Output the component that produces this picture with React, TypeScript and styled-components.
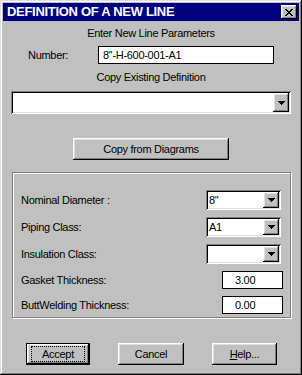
import React from "react";
import styled, { createGlobalStyle } from "styled-components";

const Global = createGlobalStyle`
  html, body { margin: 0; padding: 0; background: #c0c0c0; }
  body { font-family: "Liberation Sans", Arial, sans-serif; font-size: 11px; letter-spacing: -0.3px; color: #000; }
`;

const raised = `box-shadow: inset -1px -1px #000, inset 1px 1px #fff, inset -2px -2px #808080, inset 2px 2px #dfdfdf;`;
const sunken = `box-shadow: inset 1px 1px #808080, inset -1px -1px #fff, inset 2px 2px #000, inset -2px -2px #dfdfdf;`;

const Window = styled.div`
  width: 302px;
  height: 375px;
  box-sizing: border-box;
  background: #c0c0c0;
  padding: 3px;
  box-shadow: inset -1px -1px #000, inset 1px 1px #dfdfdf, inset -2px -2px #808080, inset 2px 2px #fff;
  display: flex;
  flex-direction: column;
`;

const TitleBar = styled.div`
  height: 18px;
  background: #000080;
  display: flex;
  align-items: center;
  justify-content: space-between;
  padding: 0 2px 0 4px;
`;

const TitleText = styled.div`
  color: #fff;
  font-weight: bold;
  font-size: 13px;
  letter-spacing: -0.3px;
  line-height: 18px;
`;

const CloseButton = styled.div`
  width: 16px;
  height: 14px;
  background: #c0c0c0;
  ${raised}
  display: flex;
  align-items: center;
  justify-content: center;
`;

const Body = styled.div`
  display: flex;
  flex-direction: column;
`;

const Caption = styled.div<{ $mt: number }>`
  margin-top: ${(p) => p.$mt}px;
  height: 14px;
  line-height: 14px;
  text-align: center;
`;

const NumberRow = styled.div`
  margin-top: 6px;
  display: flex;
  align-items: center;
  padding-left: 25px;
`;

const Label = styled.div<{ $w?: number }>`
  ${(p) => (p.$w ? `width: ${p.$w}px;` : "flex: 1;")}
  line-height: 14px;
`;

const TextBox = styled.div<{ $w: number; $pl: number }>`
  width: ${(p) => p.$w}px;
  height: 18px;
  box-sizing: border-box;
  border: 1px solid #000;
  background: #fff;
  padding-left: ${(p) => p.$pl}px;
  line-height: 16px;
`;

const ComboFrame = styled.div<{ $w: number; $h: number; $ml: number; $mr: number; $mt: number }>`
  width: ${(p) => p.$w}px;
  height: ${(p) => p.$h}px;
  margin: ${(p) => p.$mt}px ${(p) => p.$mr}px 0 ${(p) => p.$ml}px;
  box-sizing: border-box;
  padding: 2px;
  background: #fff;
  ${sunken}
  display: flex;
`;

const ComboValue = styled.div`
  flex: 1;
  padding-left: 1px;
  display: flex;
  align-items: center;
`;

const DropButton = styled.div`
  width: 16px;
  background: #c0c0c0;
  ${raised}
  display: flex;
  align-items: center;
  justify-content: center;
`;

const PushButton = styled.div<{ $w: number; $default?: boolean }>`
  width: ${(p) => p.$w}px;
  height: 22px;
  box-sizing: border-box;
  background: #c0c0c0;
  display: flex;
  align-items: center;
  justify-content: center;
  ${(p) =>
    p.$default
      ? `border: 1px solid #000; box-shadow: inset -1px -1px #000, inset 1px 1px #fff, inset -2px -2px #808080, inset 2px 2px #dfdfdf;`
      : raised}
`;

const CenterButton = styled(PushButton)`
  margin-top: 24px;
  align-self: center;
  height: 22px;
`;

const FocusRing = styled.div`
  border: 1px dotted #000;
  padding: 1px 3px;
  line-height: 12px;
  width: 46px;
  text-align: center;
`;

const Group = styled.div`
  margin: 12px 0 0 9px;
  width: 279px;
  height: 146px;
  box-sizing: border-box;
  border: 1px solid #808080;
  box-shadow: inset 1px 1px #fff, 1px 1px #fff;
  padding: 17px 7px 3px 8px;
  display: flex;
  flex-direction: column;
  gap: 7px;
`;

const GroupRow = styled.div<{ $h: number }>`
  height: ${(p) => p.$h}px;
  display: flex;
  align-items: center;
`;

const ButtonBar = styled.div`
  margin-top: 25px;
  padding-left: 23px;
  display: flex;
  gap: 28px;
`;

const Arrow = () => (
  <svg width="7" height="4" viewBox="0 0 7 4" shapeRendering="crispEdges">
    <rect x="0" y="0" width="7" height="1" fill="#000" />
    <rect x="1" y="1" width="5" height="1" fill="#000" />
    <rect x="2" y="2" width="3" height="1" fill="#000" />
    <rect x="3" y="3" width="1" height="1" fill="#000" />
  </svg>
);

const CloseX = () => (
  <svg width="8" height="7" viewBox="0 0 8 7" shapeRendering="crispEdges">
    <path d="M0 0h2v1h-2zM6 0h2v1h-2zM1 1h2v1h-2zM5 1h2v1h-2zM2 2h4v1h-4zM3 3h2v1h-2zM2 4h4v1h-4zM1 5h2v1h-2zM5 5h2v1h-2zM0 6h2v1h-2zM6 6h2v1h-2z" fill="#000" />
  </svg>
);

type ComboProps = { w: number; h: number; ml?: number; mr?: number; mt?: number; value?: string };
const Combo = ({ w, h, ml = 0, mr = 0, mt = 0, value = "" }: ComboProps) => (
  <ComboFrame $w={w} $h={h} $ml={ml} $mr={mr} $mt={mt}>
    <ComboValue>{value}</ComboValue>
    <DropButton>
      <Arrow />
    </DropButton>
  </ComboFrame>
);

export default function App() {
  return (
    <>
      <Global />
      <Window>
        <TitleBar>
          <TitleText>DEFINITION OF A NEW LINE</TitleText>
          <CloseButton>
            <CloseX />
          </CloseButton>
        </TitleBar>
        <Body>
          <Caption $mt={5}>Enter New Line Parameters</Caption>
          <NumberRow>
            <Label $w={70}>Number:</Label>
            <TextBox $w={176} $pl={4}>8''-H-600-001-A1</TextBox>
          </NumberRow>
          <Caption $mt={6}>Copy Existing Definition</Caption>
          <Combo w={280} h={23} ml={8} mt={7} />
          <CenterButton $w={156}>Copy from Diagrams</CenterButton>
          <Group>
            <GroupRow $h={20}>
              <Label>Nominal Diameter :</Label>
              <Combo w={75} h={20} mr={2} value="8''" />
            </GroupRow>
            <GroupRow $h={20}>
              <Label>Piping Class:</Label>
              <Combo w={75} h={20} mr={2} value="A1" />
            </GroupRow>
            <GroupRow $h={20}>
              <Label>Insulation Class:</Label>
              <Combo w={75} h={20} mr={2} />
            </GroupRow>
            <GroupRow $h={18}>
              <Label>Gasket Thickness:</Label>
              <TextBox $w={61} $pl={12}>3.00</TextBox>
            </GroupRow>
            <GroupRow $h={18}>
              <Label>ButtWelding Thickness:</Label>
              <TextBox $w={61} $pl={12}>0.00</TextBox>
            </GroupRow>
          </Group>
          <ButtonBar>
            <PushButton $w={64} $default>
              <FocusRing>Accept</FocusRing>
            </PushButton>
            <PushButton $w={66}>Cancel</PushButton>
            <PushButton $w={65}>
              <span>
                <u>H</u>elp...
              </span>
            </PushButton>
          </ButtonBar>
        </Body>
      </Window>
    </>
  );
}
